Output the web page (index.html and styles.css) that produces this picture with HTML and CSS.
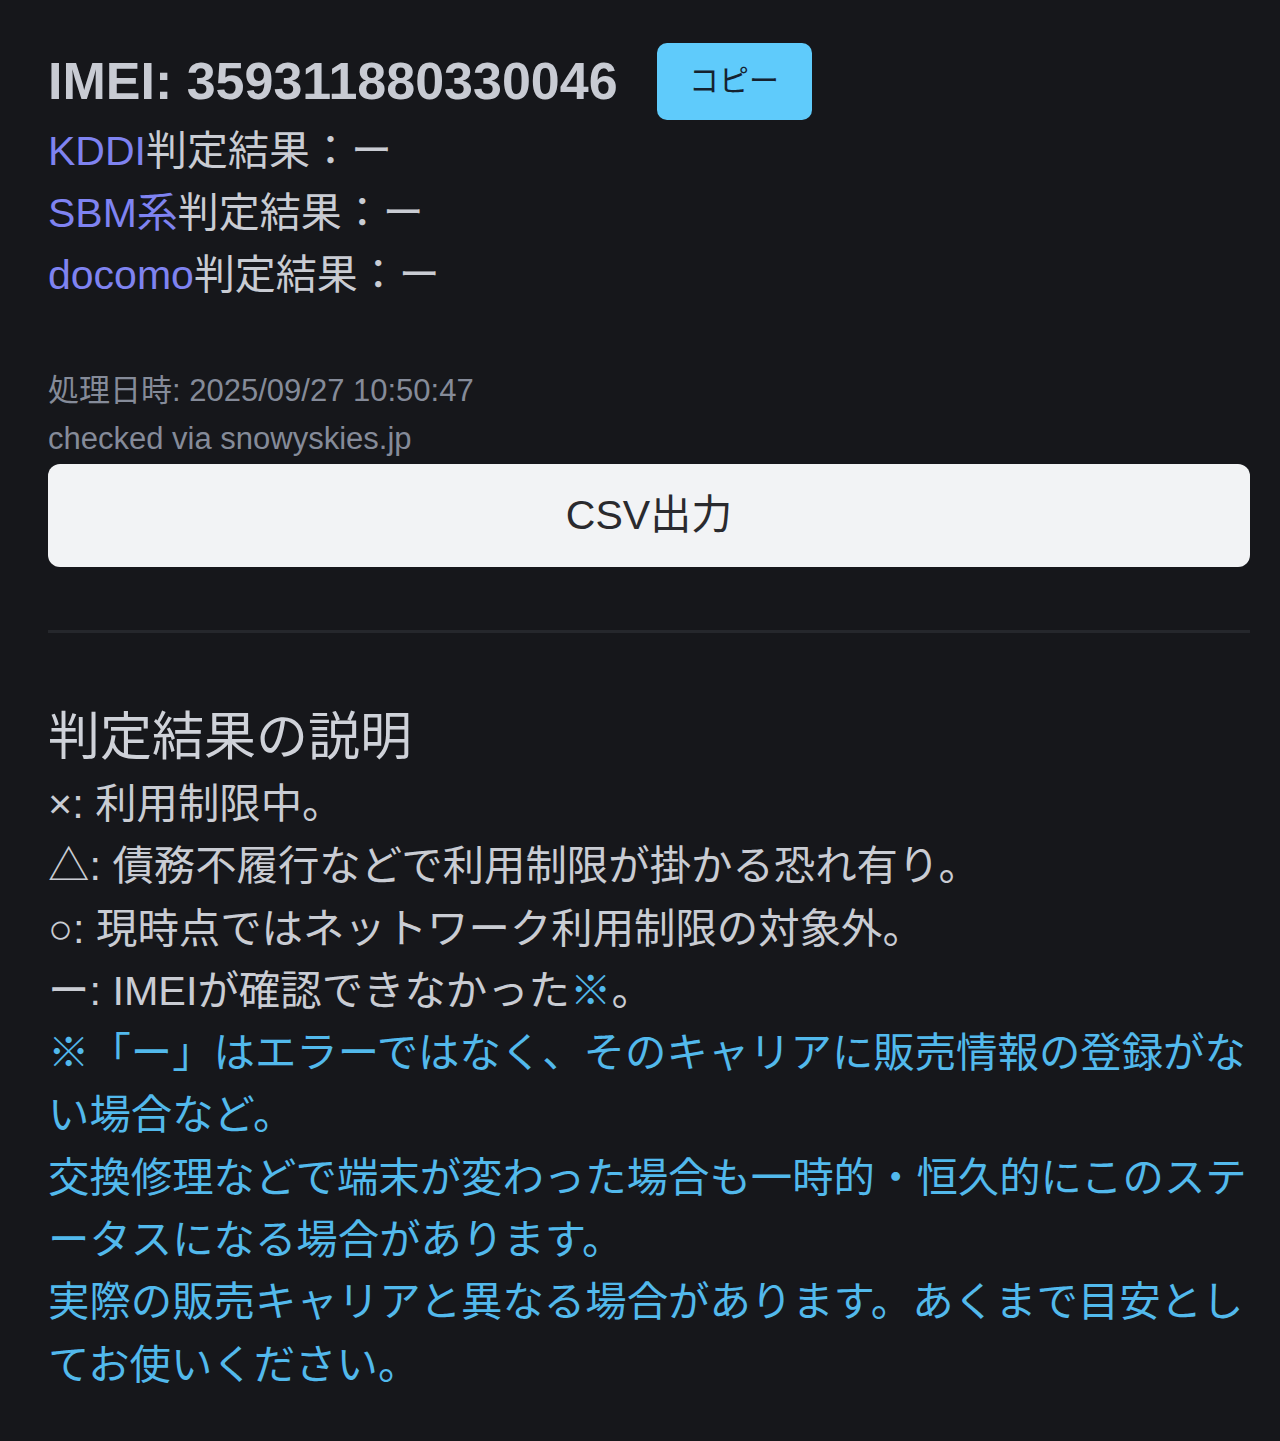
FILE: index.html
```html
<!DOCTYPE html>
<html lang="ja">
<head>
<meta charset="utf-8">
<title>IMEI判定結果</title>
<link rel="stylesheet" href="styles.css">
</head>
<body>
<main class="page">
  <section class="result">
    <div class="imei-row">
      <h1 class="imei">IMEI: 359311880330046</h1>
      <button class="copy-btn" type="button">コピー</button>
    </div>
    <p class="line"><span class="carrier">KDDI</span>判定結果：ー</p>
    <p class="line"><span class="carrier">SBM系</span>判定結果：ー</p>
    <p class="line"><span class="carrier">docomo</span>判定結果：ー</p>
    <div class="meta">
      <p>処理日時: 2025/09/27 10:50:47</p>
      <p>checked via snowyskies.jp</p>
    </div>
    <button class="csv-btn" type="button">CSV出力</button>
  </section>
  <hr class="divider">
  <section class="explain">
    <h2 class="explain-title">判定結果の説明</h2>
    <p class="line">×: 利用制限中。</p>
    <p class="line">△: 債務不履行などで利用制限が掛かる恐れ有り。</p>
    <p class="line">○: 現時点ではネットワーク利用制限の対象外。</p>
    <p class="line">ー: IMEIが確認できなかった<span class="note">※</span>。</p>
    <p class="note-text">※「ー」はエラーではなく、そのキャリアに販売情報の登録がない場合など。<br>交換修理などで端末が変わった場合も一時的・恒久的にこのステータスになる場合があります。<br>実際の販売キャリアと異なる場合があります。あくまで目安としてお使いください。</p>
  </section>
</main>
</body>
</html>
```
FILE: styles.css
```css
html, body {
  margin: 0;
  padding: 0;
  background: #16171b;
}
body {
  font-family: "Liberation Sans", "Noto Sans CJK JP", sans-serif;
  color: #c9ccd3;
  font-size: 41px;
  line-height: 62px;
}
.page {
  padding: 43px 30px 40px 48px;
}
p { margin: 0; }
.imei-row {
  display: flex;
  align-items: center;
  gap: 39px;
}
.imei {
  margin: 0;
  font-size: 52px;
  line-height: 77px;
  font-weight: 700;
  color: #c8cbd3;
}
.copy-btn {
  width: 155px;
  height: 77px;
  border: none;
  border-radius: 10px;
  background: #5fcbfb;
  color: #15222f;
  font-family: "Liberation Sans", "Noto Sans CJK JP", sans-serif;
  font-size: 30px;
  padding: 0 0 8px;
}
.carrier { color: #7f83f1; }
.meta {
  margin-top: 61px;
  font-size: 31px;
  line-height: 48px;
  color: #858b99;
}
.csv-btn {
  display: block;
  width: 100%;
  height: 103px;
  margin-top: 1px;
  border: none;
  border-radius: 12px;
  background: #f2f3f5;
  color: #2a2a2e;
  font-family: "Liberation Sans", "Noto Sans CJK JP", sans-serif;
  font-size: 41px;
  padding: 0 0 10px;
}
.divider {
  margin: 63px 0 0;
  border: none;
  height: 3px;
  background: #25272c;
}
.explain {
  margin: 69px -4px 0 0;
  font-size: 41.4px;
  line-height: 62.3px;
}
.explain-title {
  margin: 0;
  font-size: 52px;
  line-height: 71px;
  font-weight: 400;
  color: #cfd2d9;
}
.note { color: #52b9ec; }
.note-text { color: #52b9ec; }
```
